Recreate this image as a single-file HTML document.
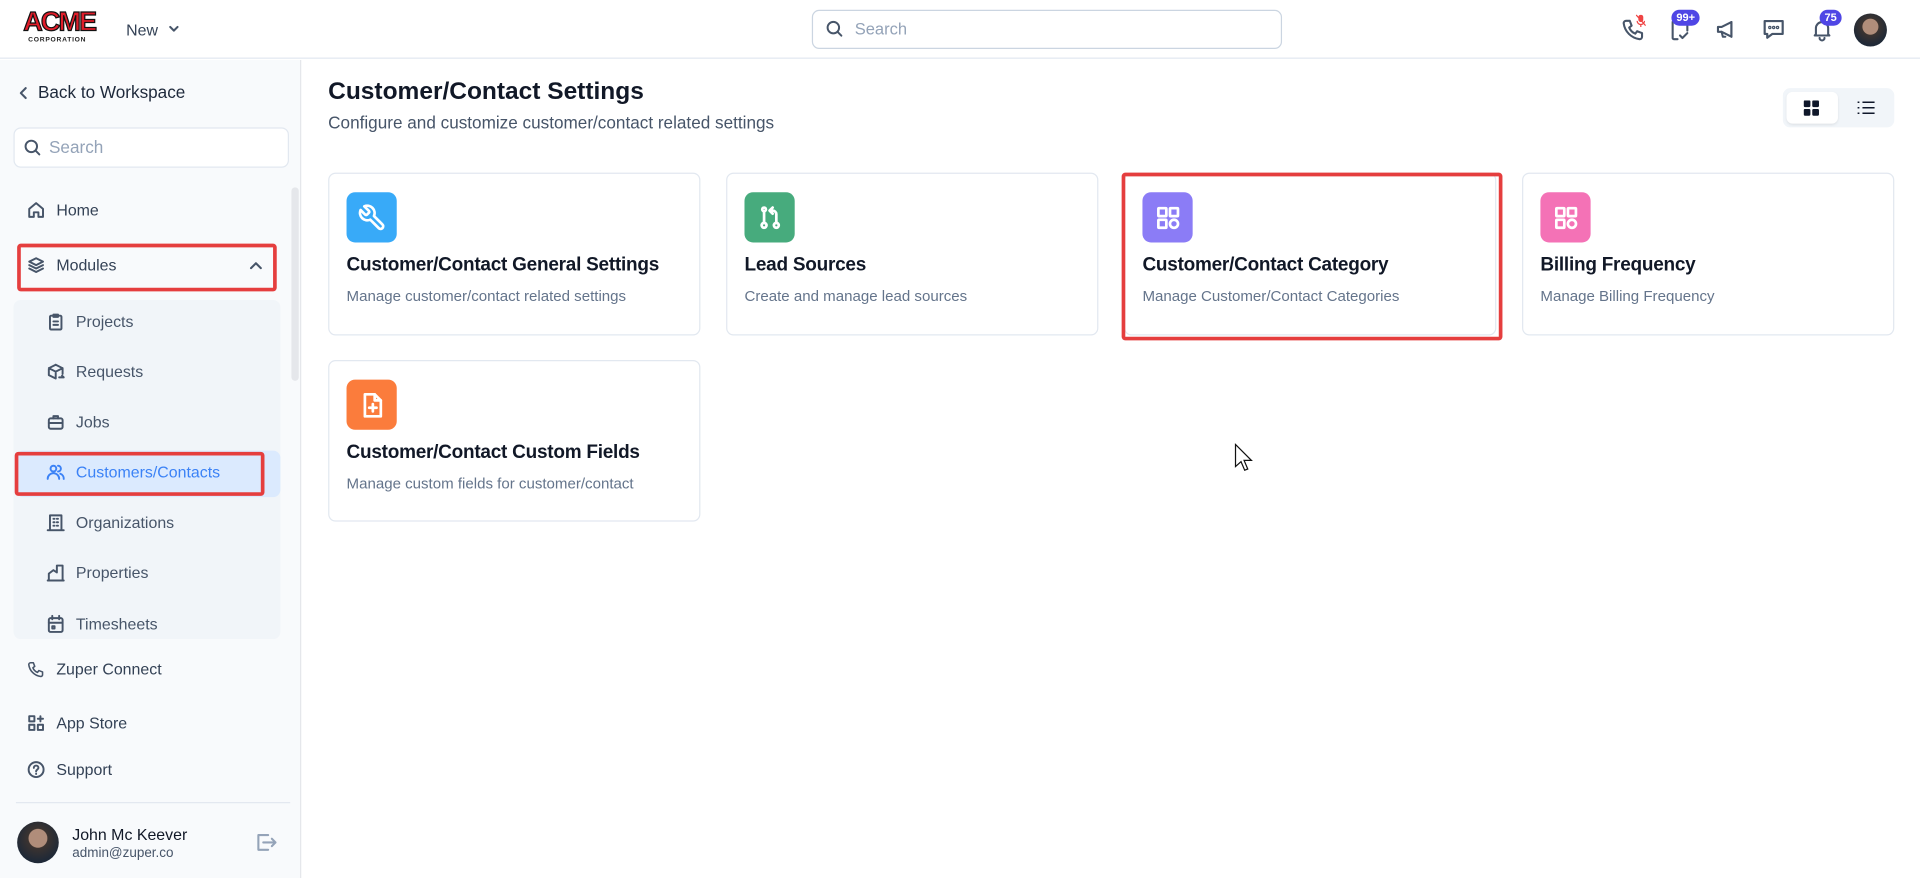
<!DOCTYPE html>
<html><head><meta charset="utf-8"><style>
*{box-sizing:border-box;margin:0;padding:0}
html,body{width:1920px;height:878px;overflow:hidden;background:#fff;font-family:"Liberation Sans",Arial,sans-serif}
#w{position:absolute;left:0;top:0;width:1568px;height:717px;transform:scale(1.22449);transform-origin:0 0;color:#1e293b}
.a{position:absolute}
.hdr{left:0;top:0;width:1568px;height:48px;border-bottom:1px solid #e2e8f0;background:#fff}
.sb{left:0;top:49px;width:246px;height:668px;background:#f8fafc;border-right:1px solid #e5e7eb}
.ni{position:absolute;left:22px;font-size:13px;color:#334155;display:flex;align-items:center;gap:9px}
.si{position:absolute;left:38px;font-size:13px;color:#475569;display:flex;align-items:center;gap:9px}
svg.ic{width:15px;height:15px;fill:none;stroke:#475569;stroke-width:1.7;stroke-linecap:round;stroke-linejoin:round}
.card{position:absolute;width:304px;height:133px;border:1px solid #e2e8f0;border-radius:6px;background:#fff}
.card .ib{position:absolute;left:14px;top:15px;width:41px;height:41px;border-radius:7px;display:flex;align-items:center;justify-content:center}
.card .t{position:absolute;left:14px;top:66px;font-size:15.5px;font-weight:bold;color:#111827;white-space:nowrap;letter-spacing:-.2px}
.card .d{position:absolute;left:14px;top:93px;font-size:12.3px;color:#64748b;white-space:nowrap}
.ib svg{width:24px;height:24px;fill:none;stroke:#fff;stroke-width:2.2;stroke-linecap:round;stroke-linejoin:round}
.badge{position:absolute;background:#4f46e5;color:#fff;font-size:9px;font-weight:bold;border-radius:8px;padding:1px 4px;line-height:11px}
.red{position:absolute;border:3px solid #e53e3e;border-radius:3px}
</style></head><body><div id="w">
<div class="a hdr">
 <div class="a" style="left:19px;top:7px;font-family:'Liberation Sans';font-weight:900;font-size:22px;color:#e11d2a;letter-spacing:-1.5px;line-height:22px;-webkit-text-stroke:1px #111">ACME</div>
 <div class="a" style="left:23px;top:30px;font-size:5.5px;font-weight:bold;color:#222;letter-spacing:.6px">CORPORATION</div>
 <div class="a" style="left:103px;top:17px;font-size:13px;color:#334155">New</div>
 <svg class="a ic" style="left:137px;top:18px;width:10px;height:10px" viewBox="0 0 10 10"><path d="M2 4l3 3 3-3"/></svg>
 <div class="a" style="left:663px;top:8px;width:384px;height:32px;border:1px solid #cbd5e1;border-radius:6px"></div>
 <svg class="a ic" style="left:674px;top:16px" viewBox="0 0 16 16"><circle cx="7" cy="7" r="5"/><path d="M11 11l3 3"/></svg>
 <div class="a" style="left:698px;top:16px;font-size:13.5px;color:#94a3b8">Search</div>
 <svg class="a ic" style="left:1324px;top:14px;width:20px;height:20px" viewBox="0 0 20 20"><path d="M4 3h3l1.5 4-2 1.5a9 9 0 005 5l1.5-2 4 1.5v3a2 2 0 01-2 2A15 15 0 012 5a2 2 0 012-2z"/></svg>
 <svg class="a" style="left:1336px;top:12px;width:8px;height:10px" viewBox="0 0 8 10"><rect x="2" y="0" width="4" height="6" rx="2" fill="#ef4444"/><path d="M1 5a3 3 0 006 0M4 8v2M0 0l8 9" stroke="#ef4444" stroke-width="1" fill="none"/></svg>
 <svg class="a ic" style="left:1362px;top:14px;width:20px;height:20px" viewBox="0 0 20 20"><path d="M8 18H5a1 1 0 01-1-1V4a1 1 0 011-1h10a1 1 0 011 1v7"/><path d="M10 15l2 2 4-4"/></svg>
 <div class="badge" style="left:1365px;top:8px">99+</div>
 <svg class="a ic" style="left:1400px;top:14px;width:20px;height:20px" viewBox="0 0 20 20"><path d="M3 8v4h3l8 4V4L6 8H3z"/><path d="M6 12l1 4h2"/><path d="M14 4v12"/></svg>
 <svg class="a ic" style="left:1438px;top:13px;width:21px;height:21px" viewBox="0 0 20 20"><path d="M3 4h14v10H9l-4 3v-3H3z"/><circle cx="7" cy="9" r=".5"/><circle cx="10" cy="9" r=".5"/><circle cx="13" cy="9" r=".5"/></svg>
 <svg class="a ic" style="left:1478px;top:14px;width:20px;height:20px" viewBox="0 0 20 20"><path d="M5 14V9a5 5 0 0110 0v5l1 1H4z"/><path d="M8 17a2 2 0 004 0"/></svg>
 <div class="badge" style="left:1486px;top:8px">75</div>
 <div class="a" style="left:1514px;top:11px;width:27px;height:27px;border-radius:50%;background:radial-gradient(circle at 50% 40%,#b08d7a 0 30%,#3b3330 32%,#1f2937 70%)"></div>
</div>
<div class="a sb">
 <svg class="a ic" style="left:13px;top:21px;width:12px;height:12px" viewBox="0 0 12 12"><path d="M8 2L4 6l4 4"/></svg>
 <div class="a" style="left:31px;top:18px;font-size:14px;color:#1e293b">Back to Workspace</div>
 <div class="a" style="left:11px;top:55px;width:225px;height:33px;border:1px solid #e2e8f0;border-radius:6px;background:#fff"></div>
 <svg class="a ic" style="left:19px;top:64px" viewBox="0 0 16 16"><circle cx="7" cy="7" r="5"/><path d="M11 11l3 3"/></svg>
 <div class="a" style="left:40px;top:63px;font-size:14px;color:#94a3b8">Search</div>
 <div class="ni" style="top:115px"><svg class="ic" viewBox="0 0 16 16"><path d="M2 7l6-5 6 5v7H10v-4H6v4H2z"/></svg>Home</div>
 <div class="ni" style="top:160px"><svg class="ic" viewBox="0 0 16 16"><path d="M8 2l6 3-6 3-6-3z"/><path d="M2 8l6 3 6-3M2 11l6 3 6-3"/></svg>Modules</div>
 <svg class="a ic" style="left:203px;top:162px;width:12px;height:12px" viewBox="0 0 12 12"><path d="M2 8l4-4 4 4"/></svg>
 <div class="red" style="left:14px;top:150px;width:212px;height:39px"></div>
 <div class="a" style="left:11px;top:196px;width:218px;height:277px;background:#f1f5f9;border-radius:6px"></div>
 <div class="a" style="left:238px;top:104px;width:6px;height:158px;background:#e5e7eb;border-radius:3px"></div>
 <div class="si" style="top:206px"><svg class="ic" viewBox="0 0 16 16"><rect x="3" y="3" width="10" height="12" rx="1"/><path d="M6 2h4v2H6zM6 8h4M6 11h4"/></svg>Projects</div>
 <div class="si" style="top:247px"><svg class="ic" viewBox="0 0 16 16"><path d="M8 2l6 3v5M8 2L2 5v6l6 3M2 5l6 3 6-3M8 8v6M11 13h4l-1.5-1.5"/></svg>Requests</div>
 <div class="si" style="top:288px"><svg class="ic" viewBox="0 0 16 16"><rect x="2" y="5" width="12" height="9" rx="1.5"/><path d="M6 5V3h4v2M2 9h12"/></svg>Jobs</div>
 <div class="a" style="left:13px;top:319px;width:216px;height:38px;background:#dbeafe;border-radius:6px"></div>
 <div class="si" style="top:329px;color:#3b82f6"><svg class="ic" style="stroke:#3b82f6" viewBox="0 0 16 16"><circle cx="6" cy="5" r="2.5"/><path d="M1 14a5 5 0 0110 0M10 2.5a2.5 2.5 0 010 5M12 9.5a4.5 4.5 0 013 4.5"/></svg>Customers/Contacts</div>
 <div class="red" style="left:12px;top:320px;width:204px;height:36px"></div>
 <div class="si" style="top:370px"><svg class="ic" viewBox="0 0 16 16"><path d="M3 15V2h10v13M1 15h14M6 5h1M9 5h1M6 8h1M9 8h1M6 11h1M9 11h1"/></svg>Organizations</div>
 <div class="si" style="top:411px"><svg class="ic" viewBox="0 0 16 16"><path d="M2 15V9l4-3 3 2V2h5v13zM1 15h14"/></svg>Properties</div>
 <div class="si" style="top:453px"><svg class="ic" viewBox="0 0 16 16"><rect x="2" y="3" width="12" height="12" rx="1.5"/><path d="M2 7h12M5 1v3M11 1v3M5 10h2v2H5z"/></svg>Timesheets</div>
 <div class="ni" style="top:490px"><svg class="ic" viewBox="0 0 20 20"><path d="M4 3h3l1.5 4-2 1.5a9 9 0 005 5l1.5-2 4 1.5v3a2 2 0 01-2 2A15 15 0 012 5a2 2 0 012-2z"/></svg>Zuper Connect</div>
 <div class="ni" style="top:534px"><svg class="ic" viewBox="0 0 16 16"><rect x="2" y="2" width="4.5" height="4.5"/><rect x="2" y="9.5" width="4.5" height="4.5"/><rect x="9.5" y="9.5" width="4.5" height="4.5"/><path d="M11.75 2v4.5M9.5 4.25H14"/></svg>App Store</div>
 <div class="ni" style="top:572px"><svg class="ic" viewBox="0 0 16 16"><circle cx="8" cy="8" r="6.5"/><path d="M6 6.5a2 2 0 114 0c0 1.5-2 1.5-2 3M8 11.5v.3"/></svg>Support</div>
 <div class="a" style="left:13px;top:606px;width:224px;height:1px;background:#e2e8f0"></div>
 <div class="a" style="left:14px;top:622px;width:34px;height:34px;border-radius:50%;background:radial-gradient(circle at 50% 40%,#b08d7a 0 28%,#3b3330 30%,#1f2937 70%)"></div>
 <div class="a" style="left:59px;top:625px;font-size:13px;color:#111827">John Mc Keever</div>
 <div class="a" style="left:59px;top:642px;font-size:11px;color:#475569">admin@zuper.co</div>
 <svg class="a ic" style="left:207px;top:629px;width:20px;height:20px;stroke:#94a3b8" viewBox="0 0 20 20"><path d="M12 4H4v12h8M8 10h10M15 7l3 3-3 3"/></svg>
</div>
<div class="a" style="left:268px;top:64px;font-size:20px;font-weight:bold;color:#111827">Customer/Contact Settings</div>
<div class="a" style="left:268px;top:92px;font-size:14px;color:#475569">Configure and customize customer/contact related settings</div>
<div class="a" style="left:1456px;top:72px;width:91px;height:32px;background:#f1f5f9;border-radius:6px"></div>
<div class="a" style="left:1459px;top:75px;width:42px;height:26px;background:#fff;border-radius:5px;box-shadow:0 1px 2px rgba(0,0,0,.08)"></div>
<svg class="a" style="left:1473px;top:82px;width:13px;height:13px" viewBox="0 0 13 13" fill="#0f172a"><rect x="0" y="0" width="5.5" height="5.5" rx="1"/><rect x="7" y="0" width="5.5" height="5.5" rx="1"/><rect x="0" y="7" width="5.5" height="5.5" rx="1"/><rect x="7" y="7" width="5.5" height="5.5" rx="1"/></svg>
<svg class="a" style="left:1517px;top:82px;width:14px;height:12px" viewBox="0 0 14 12" stroke="#0f172a" stroke-width="1.3"><path d="M4 1.5h10M4 6h10M4 10.5h10M0 1.5h1.5M0 6h1.5M0 10.5h1.5"/></svg>

<div class="card" style="left:268px;top:141px"><div class="ib" style="background:#38aaf8"><svg viewBox="0 0 24 24"><path d="M14.7 6.3a1 1 0 000 1.4l1.6 1.6a1 1 0 001.4 0l3.8-3.8a6 6 0 01-7.9 7.9l-6.9 6.9a2.1 2.1 0 01-3-3l6.9-6.9a6 6 0 017.9-7.9z" transform="scale(-1 1) translate(-24 0)"/></svg></div><div class="t">Customer/Contact General Settings</div><div class="d">Manage customer/contact related settings</div></div>
<div class="card" style="left:593px;top:141px"><div class="ib" style="background:#47ab7d"><svg viewBox="0 0 24 24"><circle cx="7" cy="18" r="2"/><circle cx="17" cy="18" r="2"/><circle cx="7" cy="5" r="1.5"/><path d="M7 7v9M17 16V9a3 3 0 00-3-3h-2M14 3.5l-2.5 2.5L14 8.5"/></svg></div><div class="t">Lead Sources</div><div class="d">Create and manage lead sources</div></div>
<div class="card" style="left:918px;top:141px"><div class="ib" style="background:#8b7cf6"><svg viewBox="0 0 24 24"><rect x="4" y="4" width="6.5" height="6.5" rx=".5"/><rect x="13.5" y="4" width="6.5" height="6.5" rx=".5"/><rect x="4" y="13.5" width="6.5" height="6.5" rx=".5"/><circle cx="16.75" cy="16.75" r="3.3"/></svg></div><div class="t">Customer/Contact Category</div><div class="d">Manage Customer/Contact Categories</div></div>
<div class="red" style="left:916px;top:141px;width:311px;height:137px"></div>
<div class="card" style="left:1243px;top:141px"><div class="ib" style="background:#f472b6"><svg viewBox="0 0 24 24"><rect x="4" y="4" width="6.5" height="6.5" rx=".5"/><rect x="13.5" y="4" width="6.5" height="6.5" rx=".5"/><rect x="4" y="13.5" width="6.5" height="6.5" rx=".5"/><circle cx="16.75" cy="16.75" r="3.3"/></svg></div><div class="t">Billing Frequency</div><div class="d">Manage Billing Frequency</div></div>
<div class="card" style="left:268px;top:294px;height:132px"><div class="ib" style="background:#fb7c3c"><svg viewBox="0 0 24 24"><path d="M6 3h8l5 5v13H6z"/><path d="M14 3v5h5M12.5 11v6M9.5 14h6"/></svg></div><div class="t">Customer/Contact Custom Fields</div><div class="d">Manage custom fields for customer/contact</div></div>
<svg class="a" style="left:1008px;top:362px;width:16px;height:24px" viewBox="0 0 16 24"><path d="M1 1v18l4.5-4 3 7 2.5-1-3-7h6z" fill="#fff" stroke="#111" stroke-width="1"/></svg>
</div></body></html>
